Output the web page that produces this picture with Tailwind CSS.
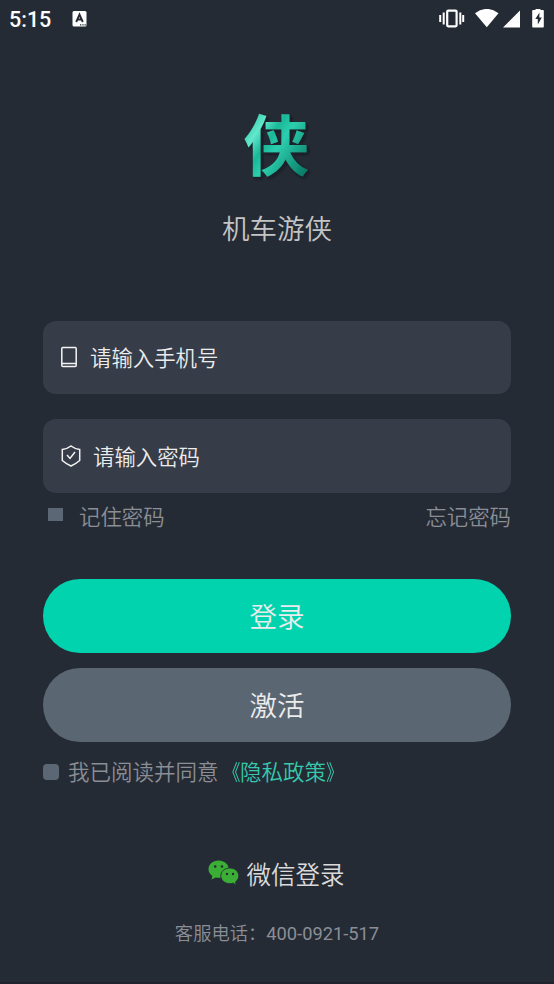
<!DOCTYPE html>
<html lang="zh-CN">
<head>
<meta charset="UTF-8">
<meta name="viewport" content="width=device-width, initial-scale=1">
<title>机车游侠</title>
<script src="https://cdn.jsdelivr.net/npm/@tailwindcss/browser@4"></script>
</head>
<body class="bg-[#252b35]">
<div class="flex h-[984px] w-[554px] flex-col overflow-hidden border-b-2 border-[#20222c] bg-[#252b35] font-[Roboto,'Noto_Sans_CJK_SC_DemiLight','Noto_Sans_CJK_SC',sans-serif] text-[#ececec]">
  <header class="flex h-[38px] shrink-0 items-center pr-[10px] pl-[9px]">
    <span class="mt-[2px] w-[63px] text-[21.5px] leading-none font-medium text-white">5:15</span>
    <svg class="h-4 w-4" viewBox="0 0 16 16"><rect x=".5" y="0" width="14" height="15.500" rx="1.5" fill="#fff"/><path d="M4.200 11 7.500 3.500 10.800 11M5.400 8.500h4.200" fill="none" stroke="#252b35" stroke-width="1.900"/><path d="M8 13.900h1.300M10.300 13.900h1.300M12.500 13.900h1.300" stroke="#252b35" stroke-width="1.300"/></svg>
    <svg class="ml-auto h-[20px] w-[106px]" viewBox="438 9 106 20" fill="#fff">
      <rect x="447.200" y="10.700" width="9.400" height="15.600" rx="1" fill="none" stroke="#fff" stroke-width="2.200"/>
      <path d="M443.700 12.500v12M460.300 12.500v12M440.200 15v7M463.200 15v7" stroke="#fff" stroke-width="2"/>
      <path d="M475 13.300Q486.800 4.500 498.500 13.300L486.800 27.200Z"/>
      <path d="M520 10.500V27.500H503Z"/>
      <path d="M533 10h2.500V8.500h5V10h2.500q.8 0 .8.800V26.700q0 .8-.8.800H533q-.8 0-.8-.8V10.800q0-.8.800-.8Z"/>
      <path d="m539.500 12.500-4.200 6.500h2.500v5.500l4-7h-2.500Z" fill="#252b35"/>
    </svg>
  </header>

  <section class="flex flex-col items-center pt-[70px]">
    <svg class="h-[80px] w-[80px] overflow-visible" viewBox="0 0 80 80">
      <defs>
        <linearGradient id="jade" x1="0" y1="0" x2="1" y2="1">
          <stop offset=".1" stop-color="#16b394"/><stop offset=".3" stop-color="#62e8cc"/><stop offset=".43" stop-color="#19b898"/><stop offset=".54" stop-color="#2cceae"/><stop offset=".9" stop-color="#087663"/>
        </linearGradient>
        <filter id="shade" x="-20%" y="-20%" width="150%" height="150%"><feDropShadow dx="2" dy="2" stdDeviation="1.500" flood-color="#11161c" flood-opacity=".7"/></filter>
      </defs>
      <text x="6.500" y="62" font-family="Noto Sans CJK SC, sans-serif" font-size="65.500" font-weight="700" fill="url(#jade)" filter="url(#shade)">侠</text>
    </svg>
    <h1 class="mt-[22px] text-[27.5px] leading-[40px] font-[350] text-[#c4c4c4]">机车游侠</h1>
  </section>

  <form class="mt-[70.500px] flex flex-col px-[43px] font-[350]">
    <div class="flex h-[73.500px] items-center rounded-[13px] bg-[#363c48] pl-[18px] text-[21.400px]">
      <svg class="mr-[13px] h-[22px] w-[16px]" viewBox="0 0 16 22" fill="none" stroke="#f4f4f4" stroke-width="1.500"><rect x=".8" y="1.500" width="14.400" height="19" rx="1"/><path d="M1 17.500h14"/></svg>
      <span class="pt-[4px]">请输入手机号</span>
    </div>
    <div class="mt-[25px] flex h-[73.500px] items-center rounded-[13px] bg-[#363c48] pl-[18px] text-[21.400px]">
      <svg class="mr-[12px] h-[22px] w-[20px]" viewBox="0 0 20 22" fill="none" stroke="#f4f4f4" stroke-width="1.500"><path d="M10 1Q13.500 3.700 18.700 4.500V15.500Q16 18 10 21Q4 18 1.300 15.500V4.500Q6.500 3.700 10 1Z"/><path d="m6 10 3 3.400 5-6.400"/></svg>
      <span class="pt-[4px]">请输入密码</span>
    </div>
    <div class="mt-[8px] flex h-[32px] items-center text-[21.400px] text-[#8b8e95]">
      <i class="mr-[16px] mb-[4px] ml-[5px] h-[13px] w-[15px] bg-[#5b6775]"></i>
      <span class="pt-[4px]">记住密码</span><span class="ml-auto pt-[4px]">忘记密码</span>
    </div>
    <button type="button" class="mt-[46px] h-[74px] rounded-full bg-[#02d3af] pt-[4px] text-[27.500px]">登录</button>
    <button type="button" class="mt-[15px] h-[74px] rounded-full bg-[#5b6673] pt-[4px] text-[27.500px]">激活</button>
    <div class="mt-[14px] flex h-[32px] items-center text-[21.500px] text-[#8b8e95]">
      <i class="mr-[9px] h-[16px] w-[16px] rounded-[4px] bg-[#5b6775]"></i>
      <span class="pt-[4px]">我已阅读并同意</span><span class="pt-[4px] text-[#36c9ab]"><span class="inline-block origin-right scale-x-80">《</span>隐私政策<span class="inline-block origin-left scale-x-80">》</span></span>
    </div>
  </form>

  <div class="mt-[68px] flex h-[36px] items-center justify-center text-[24.500px] font-[350] text-[#dadada]">
    <svg class="mr-[8px] mb-[1px] -ml-[2px] h-[26px] w-[31px]" viewBox="0 0 31 26"><path d="M10.500.5C4.800.5.500 4.300.500 9.200c0 2.800 1.500 5.100 3.900 6.700L3.500 19.500l4.200-2.100c1 .3 2 .4 3.100.4 5.700 0 10-3.700 10-8.600S16.200.5 10.500.5Z" fill="#3bae35"/><path d="M21.800 8c-5 0-9 3.400-9 7.800s4 7.900 9 7.900c1.200 0 2.300-.2 3.300-.6l3.200 2.100-.8-3.300c2-1.400 3.300-3.600 3.300-6.100C30.800 11.400 26.800 8 21.800 8Z" fill="#3bae35" stroke="#252b35" stroke-width=".9"/><g fill="#252b35"><circle cx="7.200" cy="6.500" r="1.300"/><circle cx="14" cy="6.500" r="1.300"/><circle cx="19" cy="14" r="1.200"/><circle cx="25" cy="14" r="1.200"/></g></svg>
    <span class="pt-[5px]">微信登录</span>
  </div>
  <p class="mt-[28px] text-center text-[18.300px] leading-[28px] text-[#8b8e95]">客服电话：400-0921-517</p>
</div>
</body>
</html>
